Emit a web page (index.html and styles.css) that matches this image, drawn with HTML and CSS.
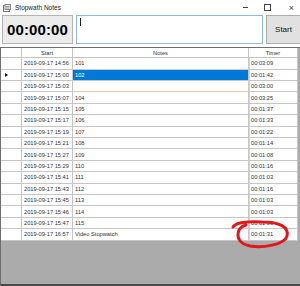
FILE: index.html
```html
<!DOCTYPE html>
<html lang="en">
<head>
    <meta charset="UTF-8">
    <title>Stopwath Notes</title>
    <link rel="stylesheet" href="styles.css">
</head>
<body>
    <div class="window">
        <div class="titlebar">
            <svg class="app-icon" width="8" height="8" viewBox="0 0 8 8">
                <rect x="0.5" y="1.5" width="6" height="6" fill="#fff" stroke="#7a7a7a"/>
                <rect x="2" y="0.5" width="5.5" height="5" fill="#e8e8e8" stroke="#8a8a8a"/>
                <line x1="3" y1="2.5" x2="6.5" y2="2.5" stroke="#6a6a6a" stroke-width="0.6"/>
                <line x1="3" y1="4" x2="6.5" y2="4" stroke="#6a6a6a" stroke-width="0.6"/>
            </svg>
            <span class="title">Stopwath Notes</span>
            <div class="controls">
                <span class="ctl ctl-min"></span>
                <span class="ctl ctl-max"></span>
                <span class="ctl ctl-close">×</span>
            </div>
        </div>

        <div class="toolbar">
            <div class="timer-box">00:00:00</div>
            <div class="note-input"><span class="caret"></span></div>
            <button class="start-button">Start</button>
        </div>

        <div class="grid">
            <div class="row header">
                <div class="cell rowhead"></div>
                <div class="cell center">Start</div>
                <div class="cell center">Notes</div>
                <div class="cell center">Timer</div>
            </div>
            <div class="row"><div class="cell rowhead"></div><div class="cell">2019-09-17 14:56</div><div class="cell">101</div><div class="cell timer">00:03:09</div></div>
            <div class="row"><div class="cell rowhead"><span class="marker"></span></div><div class="cell">2019-09-17 15:00</div><div class="cell selected">102</div><div class="cell timer">00:01:42</div></div>
            <div class="row editing"><div class="cell rowhead"></div><div class="cell">2019-09-17 15:03</div><div class="cell"></div><div class="cell timer">00:03:00</div></div>
            <div class="row"><div class="cell rowhead"></div><div class="cell">2019-09-17 15:07</div><div class="cell">104</div><div class="cell timer">00:03:25</div></div>
            <div class="row"><div class="cell rowhead"></div><div class="cell">2019-09-17 15:15</div><div class="cell">105</div><div class="cell timer">00:01:37</div></div>
            <div class="row"><div class="cell rowhead"></div><div class="cell">2019-09-17 15:17</div><div class="cell">106</div><div class="cell timer">00:01:33</div></div>
            <div class="row"><div class="cell rowhead"></div><div class="cell">2019-09-17 15:19</div><div class="cell">107</div><div class="cell timer">00:01:22</div></div>
            <div class="row"><div class="cell rowhead"></div><div class="cell">2019-09-17 15:21</div><div class="cell">108</div><div class="cell timer">00:01:14</div></div>
            <div class="row"><div class="cell rowhead"></div><div class="cell">2019-09-17 15:27</div><div class="cell">109</div><div class="cell timer">00:01:08</div></div>
            <div class="row"><div class="cell rowhead"></div><div class="cell">2019-09-17 15:29</div><div class="cell">110</div><div class="cell timer">00:01:16</div></div>
            <div class="row"><div class="cell rowhead"></div><div class="cell">2019-09-17 15:41</div><div class="cell">111</div><div class="cell timer">00:01:03</div></div>
            <div class="row"><div class="cell rowhead"></div><div class="cell">2019-09-17 15:43</div><div class="cell">112</div><div class="cell timer">00:01:16</div></div>
            <div class="row"><div class="cell rowhead"></div><div class="cell">2019-09-17 15:45</div><div class="cell">113</div><div class="cell timer">00:01:03</div></div>
            <div class="row"><div class="cell rowhead"></div><div class="cell">2019-09-17 15:46</div><div class="cell">114</div><div class="cell timer">00:01:03</div></div>
            <div class="row"><div class="cell rowhead"></div><div class="cell">2019-09-17 15:47</div><div class="cell">115</div><div class="cell timer">00:01:03</div></div>
            <div class="row"><div class="cell rowhead"></div><div class="cell">2019-09-17 16:57</div><div class="cell">Video Stopwatch</div><div class="cell timer">00:01:31</div></div>
        </div>
    </div>

    <!-- hand drawn red circle over the last timer -->
    <svg class="scribble" width="300" height="286" viewBox="0 0 300 286">
        <path d="M233 227 C236 222, 246 221, 262 222 C280 222, 289 227, 287 236 C285 245, 262 248, 250 246 C240 244, 236 238, 239 230 C240 228, 243 226, 246 225"
              fill="none" stroke="#e3161b" stroke-width="3" stroke-linecap="round"/>
    </svg>
</body>
</html>
```

FILE: styles.css
```css
* {
    margin: 0;
    padding: 0;
    box-sizing: border-box;
}

body {
    font-family: "Liberation Sans", Arial, sans-serif;
    width: 300px;
    height: 286px;
    overflow: hidden;
    background-color: #f0f0f0;
    color: #000;
}

.window {
    display: flex;
    flex-direction: column;
    height: 286px;
}

.titlebar {
    height: 15px;
    display: flex;
    align-items: center;
    padding-left: 3px;
    background-color: #fff;
}

.app-icon {
    margin-right: 4px;
}

.title {
    font-size: 6.5px;
    color: #222;
}

.controls {
    margin-left: auto;
    display: flex;
    align-items: center;
}

.ctl {
    width: 22px;
    height: 15px;
    display: flex;
    align-items: center;
    justify-content: center;
}

.ctl-min::before {
    content: "";
    width: 5px;
    border-top: 1px solid #444;
}

.ctl-max::before {
    content: "";
    width: 5px;
    height: 5px;
    border: 1px solid #444;
}

.ctl-close {
    justify-content: flex-end;
    padding-right: 6px;
    font-size: 9px;
    color: #444;
}

.toolbar {
    display: flex;
    align-items: stretch;
    gap: 3px;
    height: 32px;
    padding: 0 0 3px 2px;
    background-color: #fff;
}

.timer-box {
    width: 71px;
    background-color: #ececec;
    border: 1px solid #b4b4b4;
    font-size: 15px;
    font-weight: 700;
    display: flex;
    align-items: center;
    justify-content: center;
    letter-spacing: 0.1px;
}

.note-input {
    width: 187px;
    background-color: #fff;
    border: 1px solid #8cbbdc;
    padding: 2px 3px;
}

.caret {
    display: block;
    width: 1px;
    height: 8px;
    background-color: #222;
}

.start-button {
    flex: 1;
    background-color: #e1e1e1;
    border: 1px solid #adadad;
    border-right: none;
    font-family: "Liberation Sans", Arial, sans-serif;
    font-size: 8px;
    color: #111;
}

.grid {
    flex: 1;
    background-color: #ababab;
    border-top: 1px solid #6e6e6e;
    border-left: 1px solid #6e6e6e;
    border-bottom: 2px solid #4a4a4a;
}

.row {
    display: grid;
    grid-template-columns: 21px 51px 176px 49px;
    height: 11.4px;
    background-color: #fff;
    width: 297px;
}

.row.header {
    height: 10.3px;
}

.cell {
    border-right: 1px solid #c6c6c6;
    border-bottom: 1px solid #c6c6c6;
    font-size: 5.7px;
    padding-left: 2px;
    display: flex;
    align-items: center;
    white-space: nowrap;
    overflow: hidden;
    color: #333;
}

.cell.center {
    justify-content: center;
    padding-left: 0;
}

.cell.timer {
    border-left: 1px solid #d8d8d8;
    padding-left: 1px;
}

.rowhead {
    padding-left: 4px;
}

.marker {
    width: 0;
    height: 0;
    border-top: 2.5px solid transparent;
    border-bottom: 2.5px solid transparent;
    border-left: 3px solid #111;
}

.cell.selected {
    background-color: #0078d7;
    color: #fff;
}

.row.editing .cell:nth-child(3) {
    border-bottom-color: #e6c9a8;
}

.scribble {
    position: absolute;
    top: 0;
    left: 0;
    pointer-events: none;
}
```
